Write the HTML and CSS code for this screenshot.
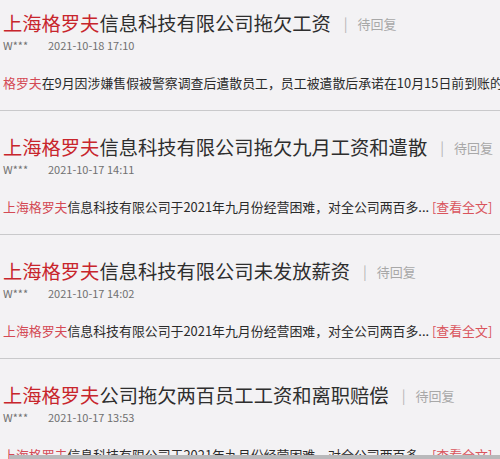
FILE: index.html
```html
<!DOCTYPE html>
<html lang="zh-CN">
<head>
<meta charset="utf-8">
<link rel="stylesheet" href="styles.css">
</head>
<body>
<div class="list">
  <div class="item first">
    <div class="title"><span class="hl">上海格罗夫</span>信息科技有限公司拖欠工资<span class="sep">|</span><span class="status">待回复</span></div>
    <div class="meta"><span class="user">W***</span><span class="date">2021-10-18 17:10</span></div>
    <div class="content"><span class="hl2">格罗夫</span>在9月因涉嫌售假被警察调查后遣散员工，员工被遣散后承诺在10月15日前到账的工资至今未发放</div>
  </div>
  <div class="item">
    <div class="title"><span class="hl">上海格罗夫</span>信息科技有限公司拖欠九月工资和遣散<span class="sep">|</span><span class="status">待回复</span></div>
    <div class="meta"><span class="user">W***</span><span class="date">2021-10-17 14:11</span></div>
    <div class="content"><span class="hl2">上海格罗夫</span>信息科技有限公司于2021年九月份经营困难，对全公司两百多... <span class="more">[查看全文]</span></div>
  </div>
  <div class="item">
    <div class="title"><span class="hl">上海格罗夫</span>信息科技有限公司未发放薪资<span class="sep">|</span><span class="status">待回复</span></div>
    <div class="meta"><span class="user">W***</span><span class="date">2021-10-17 14:02</span></div>
    <div class="content"><span class="hl2">上海格罗夫</span>信息科技有限公司于2021年九月份经营困难，对全公司两百多... <span class="more">[查看全文]</span></div>
  </div>
  <div class="item">
    <div class="title"><span class="hl">上海格罗夫</span>公司拖欠两百员工工资和离职赔偿<span class="sep">|</span><span class="status">待回复</span></div>
    <div class="meta"><span class="user">W***</span><span class="date">2021-10-17 13:53</span></div>
    <div class="content"><span class="hl2">上海格罗夫</span>信息科技有限公司于2021年九月份经营困难，对全公司两百多... <span class="more">[查看全文]</span></div>
  </div>
</div>
<div class="bottombar"></div>
</body>
</html>
```
FILE: styles.css
```css
html, body {
  margin: 0;
  padding: 0;
  width: 500px;
  height: 459px;
  overflow: hidden;
  background: #f3f2f4;
  font-family: "Noto Sans CJK SC", "Noto Sans", sans-serif;
  color: #333;
}
.list {
  display: flex;
  flex-direction: column;
}
.item {
  padding: 24px 0 17px 3px;
  border-bottom: 1px solid #c9c9cb;
}
.item.first {
  padding-top: 11px;
}
.title {
  font-size: 19.3px;
  line-height: 24px;
  height: 24px;
  white-space: nowrap;
  color: #2e2e2e;
}
.hl {
  color: #c8252c;
}
.sep {
  font-size: 14px;
  color: #b5b5b5;
  margin: 0 10px 0 13px;
  vertical-align: 2px;
}
.status {
  font-size: 13px;
  color: #a8a8a8;
  vertical-align: 2px;
}
.meta {
  margin-top: 2px;
  height: 16px;
  line-height: 16px;
  font-size: 11px;
  color: #707070;
  display: flex;
}
.user {
  width: 45px;
}
.content {
  margin-top: 20px;
  height: 20px;
  line-height: 20px;
  font-size: 12.9px;
  white-space: nowrap;
  overflow: hidden;
  color: #2a2a2a;
}
.hl2 {
  color: #d44a55;
}
.more {
  color: #d9545c;
}
.bottombar {
  position: absolute;
  left: 10px;
  right: 0;
  top: 455px;
  height: 4px;
  background: #b9b9bb;
}
```
